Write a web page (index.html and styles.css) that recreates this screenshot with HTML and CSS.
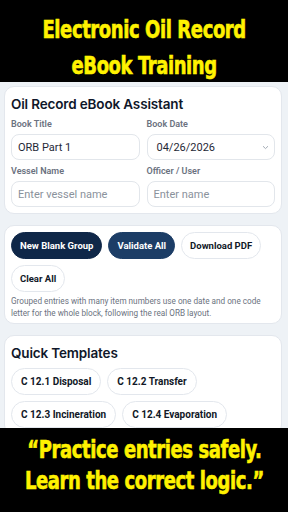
FILE: index.html
```html
<!DOCTYPE html>
<html lang="en">
<head>
<meta charset="utf-8">
<link rel="stylesheet" href="styles.css">
</head>
<body>
<div class="screen">
  <header class="banner banner-top">
    <div class="banner-text">
      <div class="bline">Electronic Oil Record</div>
      <div class="bline">eBook Training</div>
    </div>
  </header>
  <main class="app">
    <section class="card card-form">
      <h1 class="card-title">Oil Record eBook Assistant</h1>
      <div class="form-grid">
        <label class="field">
          <span class="field-label">Book Title</span>
          <span class="input">ORB Part 1</span>
        </label>
        <label class="field">
          <span class="field-label">Book Date</span>
          <span class="input input-select">04/26/2026
            <svg class="chev" width="7" height="5" viewBox="0 0 7 5"><path d="M1 1.2 3.5 3.6 6 1.2" fill="none" stroke="#9aa3ae" stroke-width="0.9"/></svg>
          </span>
        </label>
        <label class="field">
          <span class="field-label">Vessel Name</span>
          <span class="input placeholder">Enter vessel name</span>
        </label>
        <label class="field">
          <span class="field-label">Officer / User</span>
          <span class="input placeholder">Enter name</span>
        </label>
      </div>
    </section>
    <section class="card card-actions">
      <div class="btn-row">
        <button class="btn btn-dark">New Blank Group</button>
        <button class="btn btn-navy">Validate All</button>
        <button class="btn btn-light">Download PDF</button>
        <button class="btn btn-light">Clear All</button>
      </div>
      <p class="hint">Grouped entries with many item numbers use one date and one code letter for the whole block, following the real ORB layout.</p>
    </section>
    <section class="card card-templates">
      <h2 class="card-title">Quick Templates</h2>
      <div class="chip-row">
        <button class="chip">C 12.1 Disposal</button>
        <button class="chip">C 12.2 Transfer</button>
        <button class="chip">C 12.3 Incineration</button>
        <button class="chip">C 12.4 Evaporation</button>
      </div>
    </section>
  </main>
  <footer class="banner banner-bottom">
    <div class="banner-text quote">
      <div class="bline">“Practice entries safely.</div>
      <div class="bline">Learn the correct logic.”</div>
    </div>
  </footer>
</div>
</body>
</html>
```
FILE: styles.css
```css
* { box-sizing: border-box; }
html, body { margin: 0; padding: 0; }
body {
  width: 288px;
  height: 512px;
  overflow: hidden;
  background: #eef2f6;
  font-family: Roboto, "Liberation Sans", sans-serif;
  color: #0f172a;
}
.screen {
  display: flex;
  flex-direction: column;
  height: 512px;
}
.banner {
  background: #000;
  color: #fff200;
  display: flex;
  justify-content: center;
  flex-shrink: 0;
}
.banner-top { height: 82px; padding-top: 12px; }
.banner-bottom { height: 84px; padding-top: 6px; }
.banner-text {
  font-family: "DejaVu Sans Condensed", "DejaVu Sans", sans-serif;
  font-weight: bold;
  font-size: 25px;
  line-height: 36px;
  text-align: center;
  letter-spacing: -0.5px;
  transform: scaleX(0.8);
  white-space: nowrap;
  -webkit-text-stroke: 0.6px #fff200;
}
.quote { line-height: 31px; font-size: 25px; }
.app {
  flex: 1;
  overflow: hidden;
  padding: 4px 6px 0 4px;
  display: flex;
  flex-direction: column;
  gap: 11px;
}
.card {
  background: #fff;
  border: 1px solid #e3e7ed;
  border-radius: 10px;
  padding: 8px 6px 6px 6px;
  flex-shrink: 0;
}
.card-actions { padding-top: 6px; padding-bottom: 4px; }
.card-title {
  font-family: Inter, Roboto, sans-serif;
  font-size: 13.5px;
  font-weight: 600;
  margin: 0 0 6px 0;
  color: #0f172a;
  letter-spacing: -0.15px;
  line-height: 18px;
}
.form-grid {
  display: grid;
  grid-template-columns: 1fr 1fr;
  column-gap: 7px;
  row-gap: 6px;
}
.field { display: flex; flex-direction: column; gap: 4px; }
.field-label {
  font-size: 9px;
  font-weight: 600;
  color: #6b7280;
  line-height: 11px;
}
.input {
  height: 26px;
  border: 1px solid #e2e6eb;
  border-radius: 8px;
  display: flex;
  align-items: center;
  padding: 0 6px;
  font-size: 11px;
  color: #1f2937;
  background: #fff;
}
.input-select { justify-content: space-between; padding-left: 9px; padding-right: 5px; }
.placeholder { color: #8a929c; }
.btn-row { display: flex; flex-wrap: wrap; gap: 6px; }
.btn {
  height: 27px;
  border-radius: 14px;
  padding: 0 8px;
  font-family: Roboto, sans-serif;
  font-weight: 700;
  font-size: 9.5px;
  border: 1px solid #e3e7ed;
  background: #fff;
  color: #111827;
}
.btn-dark { background: #0f2748; color: #fff; border-color: #0f2748; }
.btn-navy { background: #1c3d66; color: #fff; border-color: #1c3d66; }
.hint {
  margin: 3px 0 0 0;
  font-size: 8.2px;
  line-height: 12px;
  color: #6b7280;
}
.chip-row { display: flex; flex-wrap: wrap; gap: 6px; }
.chip {
  height: 27px;
  border-radius: 14px;
  padding: 0 9px;
  font-family: Roboto, sans-serif;
  font-weight: 700;
  font-size: 10px;
  border: 1px solid #e3e7ed;
  background: #fff;
  color: #111827;
}
```
